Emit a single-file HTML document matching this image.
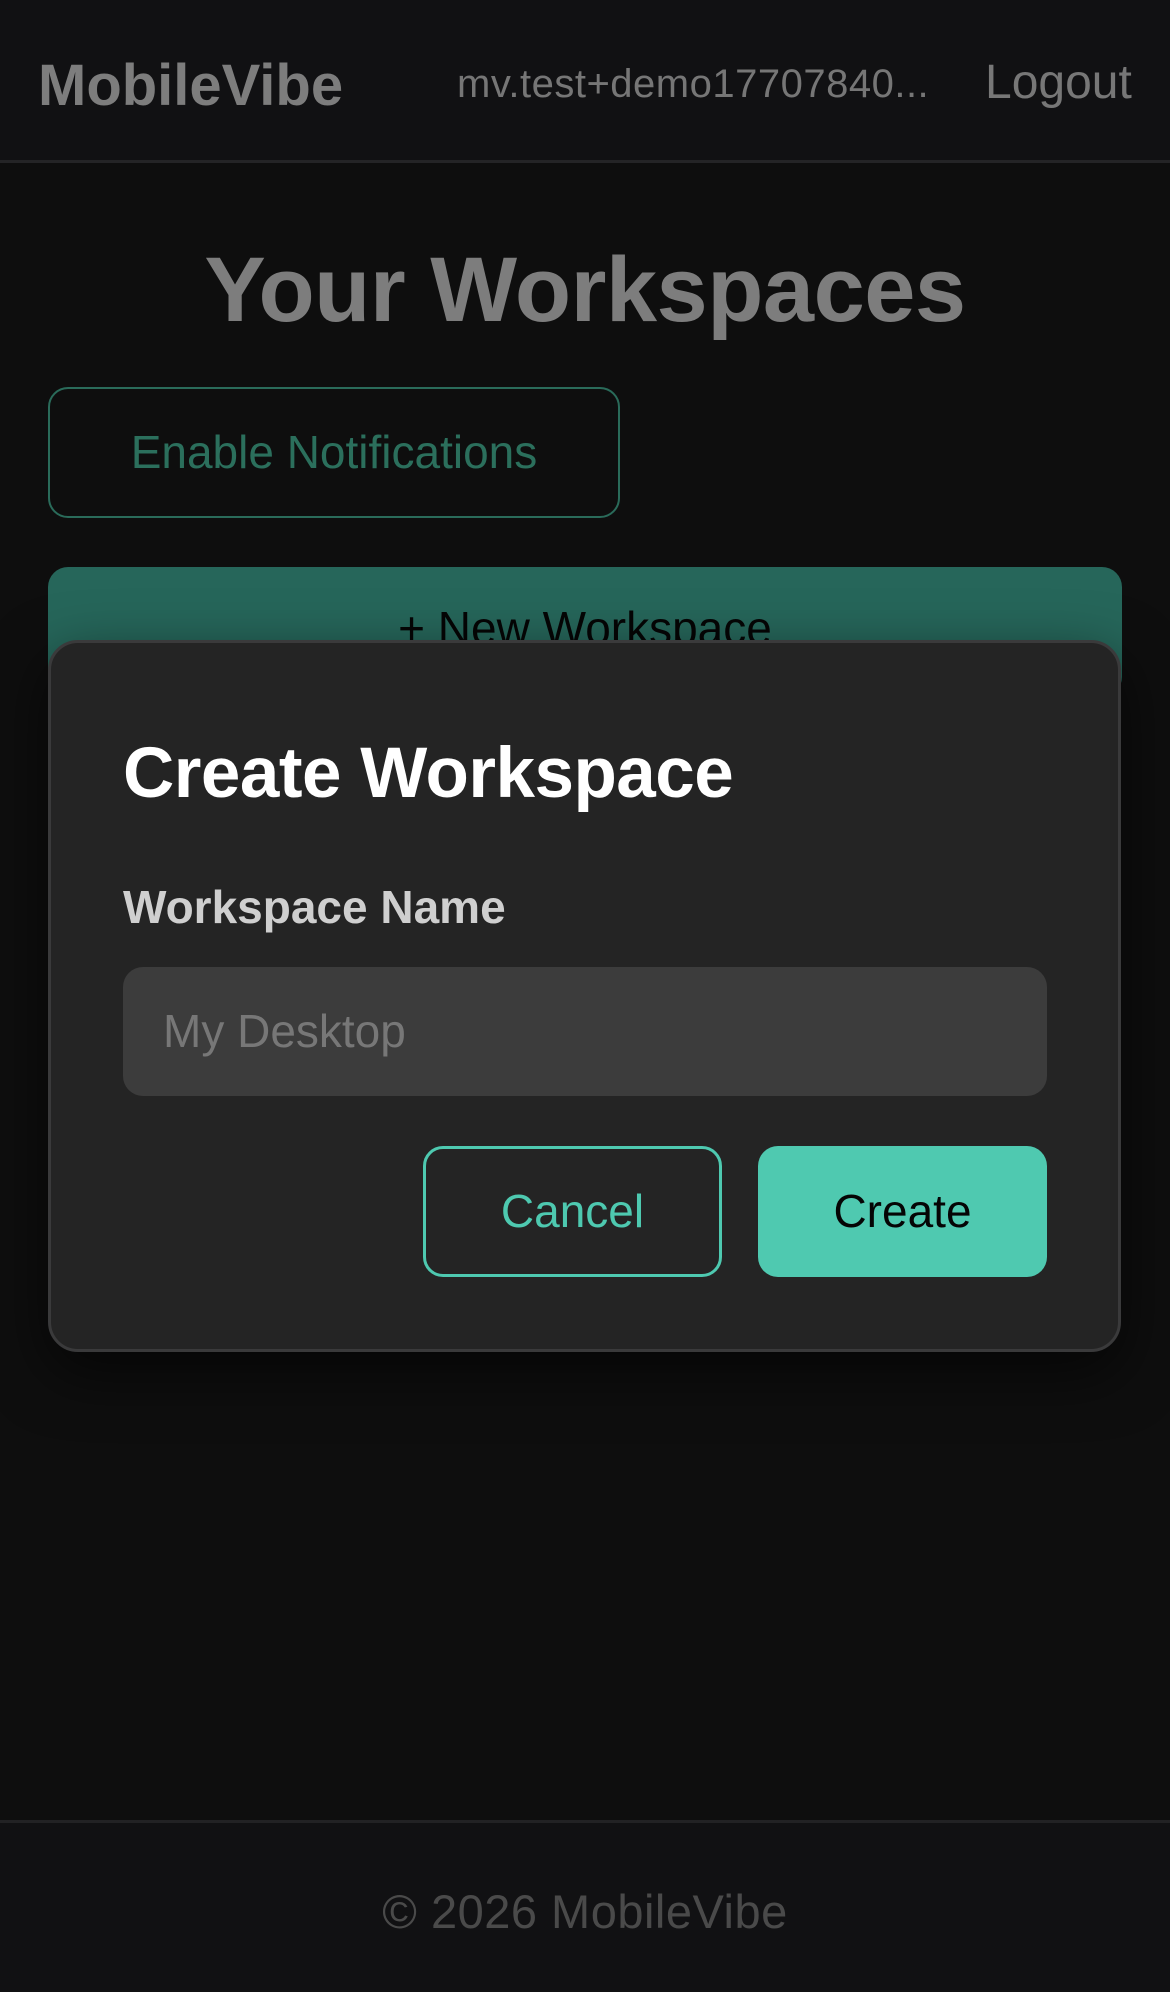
<!DOCTYPE html>
<html><head><meta charset="utf-8"><style>
*{margin:0;padding:0;box-sizing:border-box}
body{width:1170px;height:1992px;background:#0e0e0e;font-family:"Liberation Sans",sans-serif;position:relative;overflow:hidden}
.a{position:absolute;white-space:nowrap}
</style></head><body>
<div class="a" style="left:0;top:0;width:1170px;height:163px;background:#111113;border-bottom:3px solid #242426"></div>
<div class="a" style="left:38px;top:52px;font-size:58px;font-weight:bold;color:#7d7d7d;letter-spacing:0px">MobileVibe</div>
<div class="a" style="left:457px;top:62px;font-size:40px;color:#767676;letter-spacing:0.5px">mv.test+demo17707840...</div>
<div class="a" style="left:985px;top:55px;font-size:48px;color:#777">Logout</div>
<div class="a" style="left:0;top:238px;width:1170px;text-align:center;font-size:92px;font-weight:bold;color:#7d7d7d;letter-spacing:-0.5px">Your Workspaces</div>
<div class="a" style="left:48px;top:387px;width:572px;height:131px;border:2px solid #2a6b5a;border-radius:20px;color:#2b6f5c;font-size:46px;text-align:center;line-height:127px">Enable Notifications</div>
<div class="a" style="left:48px;top:567px;width:1074px;height:130px;background:#26665a;border-radius:20px;color:#050505;font-size:46px;text-align:center;padding-top:34px">+ New Workspace</div>
<div class="a" style="left:0;top:1820px;width:1170px;height:3px;background:#222224"></div>
<div class="a" style="left:0;top:1823px;width:1170px;height:169px;background:#111113"></div>
<div class="a" style="left:0;top:1884px;width:1170px;text-align:center;font-size:47px;color:#4a4a4a;letter-spacing:0.5px">© 2026 MobileVibe</div>
<div class="a" style="left:48px;top:640px;width:1073px;height:712px;background:#242424;border:3px solid #3a3a3b;border-radius:30px;box-shadow:0 20px 60px rgba(0,0,0,0.6)"></div>
<div class="a" style="left:123px;top:733px;font-size:71px;font-weight:bold;color:#fff;letter-spacing:-0.5px">Create Workspace</div>
<div class="a" style="left:123px;top:880px;font-size:46px;font-weight:bold;color:#cfcfcf;letter-spacing:0px">Workspace Name</div>
<div class="a" style="left:123px;top:967px;width:924px;height:129px;background:#3c3c3c;border-radius:20px;color:#777;font-size:46px;line-height:129px;padding-left:40px">My Desktop</div>
<div class="a" style="left:423px;top:1146px;width:299px;height:131px;border:3px solid #4ec9b0;border-radius:20px;color:#4ec9b0;font-size:46px;text-align:center;line-height:125px">Cancel</div>
<div class="a" style="left:758px;top:1146px;width:289px;height:131px;background:#4fc9b0;border-radius:20px;color:#050505;font-size:46px;text-align:center;line-height:131px">Create</div>
</body></html>
